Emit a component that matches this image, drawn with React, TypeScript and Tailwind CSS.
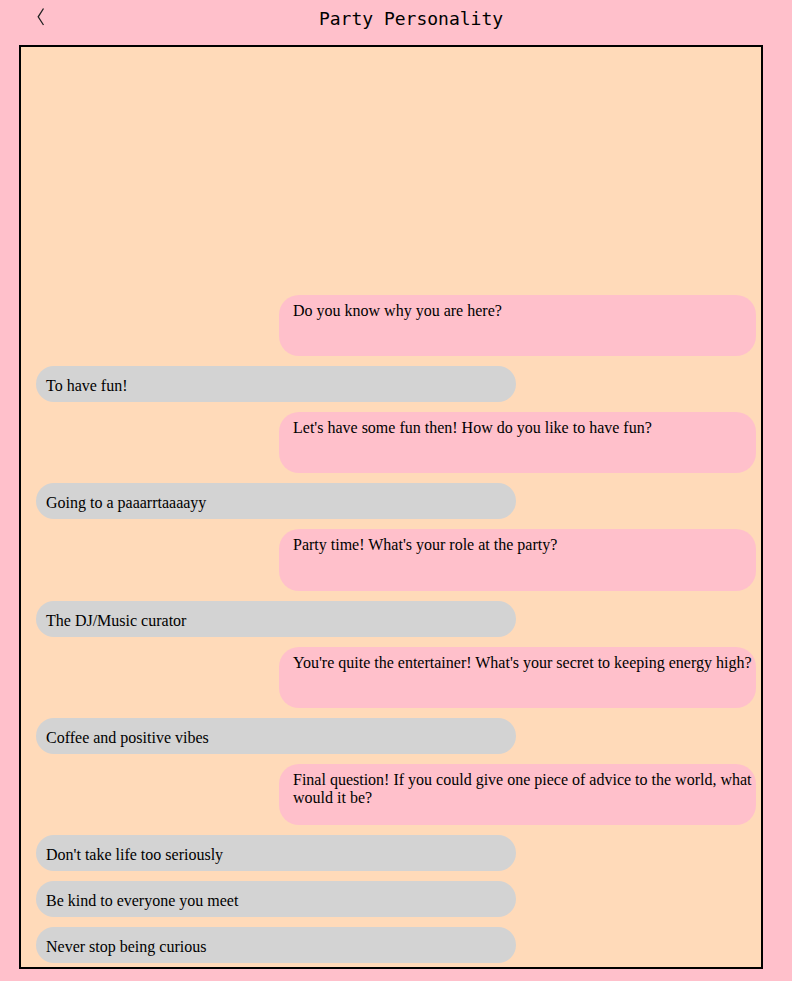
const messages: { from: "bot" | "user"; text: string }[] = [
  { from: "bot", text: "Do you know why you are here?" },
  { from: "user", text: "To have fun!" },
  { from: "bot", text: "Let's have some fun then! How do you like to have fun?" },
  { from: "user", text: "Going to a paaarrtaaaayy" },
  { from: "bot", text: "Party time! What's your role at the party?" },
  { from: "user", text: "The DJ/Music curator" },
  {
    from: "bot",
    text: "You're quite the entertainer! What's your secret to keeping energy high?",
  },
  { from: "user", text: "Coffee and positive vibes" },
  {
    from: "bot",
    text: "Final question! If you could give one piece of advice to the world, what would it be?",
  },
  { from: "user", text: "Don't take life too seriously" },
  { from: "user", text: "Be kind to everyone you meet" },
  { from: "user", text: "Never stop being curious" },
];

function Bubble({ from, text }: { from: "bot" | "user"; text: string }) {
  if (from === "bot") {
    return (
      <div className="self-end w-[477px] h-[61.2px] shrink-0 rounded-[20px] bg-[#ffc0cb] pl-[14px] pt-[7px]">
        {text}
      </div>
    );
  }
  return (
    <div className="self-start w-[480px] h-[36px] shrink-0 rounded-[20px] bg-[#d3d3d3] pl-[10px] pt-[11px]">
      {text}
    </div>
  );
}

export default function App() {
  return (
    <div className="w-[792px] h-[981px] bg-[#ffc0cb] text-black overflow-hidden">
      <header className="h-[45px] flex items-start pt-[8px]">
        <button className="ml-[37px] w-[8px] h-[21px] flex items-start">
          <svg width="8" height="21" viewBox="0 0 8 21">
            <polyline
              points="6.5,0.5 1.2,8.8 6.5,17"
              fill="none"
              stroke="#222"
              strokeWidth="1.3"
            />
          </svg>
        </button>
        <h1 className="flex-1 text-center pr-[15px] text-[18px] leading-[21px] font-['DejaVu_Sans_Mono',monospace]">
          Party Personality
        </h1>
      </header>
      <div className="ml-[19px] w-[744px] h-[924px] border-2 border-black bg-[#ffdab9] flex flex-col justify-end gap-[10px] pl-[15px] pr-[5px] pb-[4px] text-[16px] leading-[18px] font-['Liberation_Serif',serif]">
        {messages.map((m, i) => (
          <Bubble key={i} from={m.from} text={m.text} />
        ))}
      </div>
    </div>
  );
}
